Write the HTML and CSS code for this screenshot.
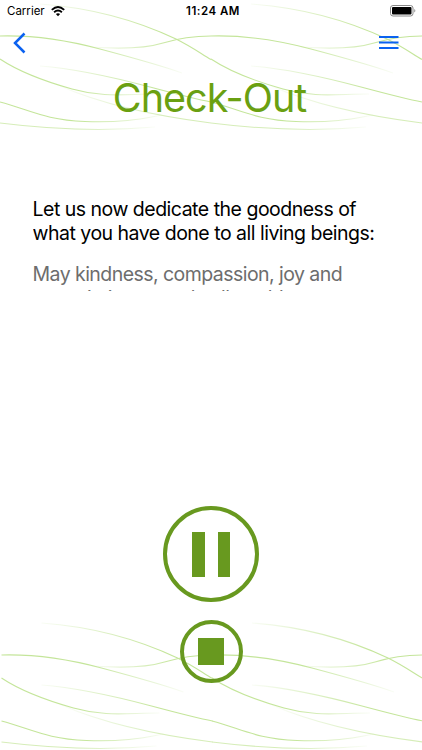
FILE: index.html
```html
<!DOCTYPE html>
<html lang="en">
<head>
    <meta charset="UTF-8">
    <meta name="viewport" content="width=device-width, initial-scale=1.0">
    <title>Check-Out</title>
    <link rel="stylesheet" href="styles.css">
</head>
<body>
    <!-- Wave pattern, repeated across the top and bottom of the screen -->
    <svg class="waves waves-top" viewBox="0 0 422 135">
        <defs>
            <linearGradient id="fadeIn"><stop offset="0" stop-color="#c4e59a" stop-opacity="0.1"/><stop offset="0.7" stop-color="#c4e59a"/></linearGradient>
            <linearGradient id="fadeOut"><stop offset="0.5" stop-color="#c4e59a"/><stop offset="1" stop-color="#c4e59a" stop-opacity="0.1"/></linearGradient>
            <g id="wave" fill="none" stroke-width="1.100">
                <path stroke="url(#fadeOut)" d="M0 36C35 35 70 41 100 49S160 65 182 73"/>
                <path stroke="url(#fadeIn)" d="M40 4C95 8 140 22 176 39C192 47 200 53 211 59.500"/>
                <path stroke="url(#fadeOut)" d="M0 59C15 69 40 80 72 89S125 94 158 94"/>
                <path stroke="url(#fadeIn)" d="M90 47C130 50 150 47 163 43S190 36 211 36"/>
                <path stroke="url(#fadeIn)" d="M40 66C80 69 120 79 150 87S195 99 211 102"/>
                <path stroke="url(#fadeOut)" d="M0 102C30 110 45 120 85 121.500S145 118 162 115"/>
                <path stroke="url(#fadeIn)" stroke-opacity="0.7" d="M60 86C90 99 140 114 211 123"/>
                <path stroke="url(#fadeOut)" stroke-opacity="0.7" d="M0 123C40 128 100 132 155 127"/>
            </g>
        </defs>
        <use href="#wave"/>
        <use href="#wave" x="211"/>
    </svg>
    <svg class="waves waves-bottom" viewBox="0 0 422 131">
        <use href="#wave" x="1.500"/>
        <use href="#wave" x="212"/>
    </svg>

    <div class="screen">
        <div class="status-bar">
            <div class="carrier">
                <span>Carrier</span>
                <svg class="wifi" viewBox="0 0 14 11">
                    <g fill="none" stroke="#000" stroke-width="1.900">
                        <path d="M0.800 3.900Q7 -1.700 13.200 3.900"/>
                        <path d="M3.100 6.300Q7 2.900 10.900 6.300"/>
                    </g>
                    <path d="M4.900 8.100Q7 6.500 9.100 8.100L7 10.300Z"/>
                </svg>
            </div>
            <div class="time">11:24 AM</div>
            <svg class="battery" viewBox="0 0 26 12">
                <rect x="0.500" y="0.500" width="22.500" height="10.500" rx="2.500" fill="#fff" stroke="#888"/>
                <rect x="2" y="2" width="19.500" height="7.500" rx="1"/>
                <path d="M24.300 4q2 1.700 0 3.500z" fill="#888"/>
            </svg>
        </div>

        <div class="nav">
            <svg class="back" viewBox="0 0 14 22"><path d="M12.500 1.500L3 11L12.500 20.500"/></svg>
            <svg class="menu" viewBox="0 0 20 14"><path d="M0 1h19.500M0 6.500h19.500M0 12h19.500"/></svg>
        </div>

        <h1>Check-Out</h1>

        <!-- Scrolling script, the next line is cut off -->
        <div class="lyrics">
            <p class="current">Let us now dedicate the goodness of<br>what you have done to all living beings:</p>
            <p class="next">May kindness, compassion, joy and<br>equanimity pervade all worlds</p>
        </div>

        <div class="controls">
            <button class="pause" aria-label="Pause"><i></i><i></i></button>
            <button class="stop" aria-label="Stop"><i></i></button>
        </div>
    </div>
</body>
</html>
```

FILE: styles.css
```css
body {
    margin: 0;
    background: #fff;
    font-family: Inter, Roboto, sans-serif;
    color: #000;
}

.screen {
    position: relative;
    width: 422px;
    height: 750px;
    overflow: hidden;
    display: flex;
    flex-direction: column;
}

/* Background waves */
.waves {
    position: absolute;
    left: 0;
    width: 422px;
    height: 135px;
}

.waves-top {
    top: 0;
}

.waves-bottom {
    top: 619px;
    height: 131px;
    overflow: hidden;
}

/* Status bar */
.status-bar {
    display: grid;
    grid-template-columns: 1fr auto 1fr;
    align-items: center;
    height: 22px;
    padding: 0 6px 0 7px;
    font-size: 11.5px;
}

.carrier {
    display: flex;
    align-items: center;
    gap: 6px;
}

.wifi {
    width: 14px;
    height: 11px;
}

.time {
    font-weight: 600;
    letter-spacing: 0.5px;
    padding-left: 3px;
}

.battery {
    width: 26px;
    height: 12px;
    justify-self: end;
}

/* Navigation */
.nav {
    display: flex;
    justify-content: space-between;
    height: 42px;
    padding: 10px 23px 0 12px;
    box-sizing: border-box;
}

.nav svg {
    fill: none;
    stroke: #0b62f0;
}

.back {
    width: 14px;
    height: 22px;
    stroke-width: 2.5;
}

.menu {
    width: 20px;
    height: 14px;
    margin-top: 4px;
    stroke-width: 2;
}

h1 {
    margin: 10px 0 0;
    padding-right: 3px;
    height: 48px;
    line-height: 49px;
    text-align: center;
    font-size: 39.5px;
    font-weight: 400;
    letter-spacing: -1px;
    color: #6aa011;
}

/* Text box */
.lyrics {
    height: 94px;
    margin: 75px 0 0 32.5px;
    overflow: hidden;
    font-size: 19.5px;
    line-height: 24px;
    letter-spacing: -0.5px;
    white-space: nowrap;
}

.lyrics p {
    margin: 0 0 17px;
}

.lyrics .next {
    color: #6d6d6d;
    letter-spacing: -0.55px;
}

/* Playback buttons */
.controls {
    margin-top: 215px;
    display: flex;
    flex-direction: column;
    align-items: center;
    gap: 18px;
}

.controls button {
    display: flex;
    align-items: center;
    justify-content: center;
    box-sizing: border-box;
    padding: 0;
    border: 4px solid #68991f;
    border-radius: 50%;
    background: none;
}

.controls i {
    background: #68991f;
}

.pause {
    width: 96px;
    height: 96px;
    gap: 13px;
}

.pause i {
    width: 12.5px;
    height: 45px;
}

.stop {
    width: 63px;
    height: 63px;
}

.stop i {
    width: 26.5px;
    height: 26.5px;
}
```
